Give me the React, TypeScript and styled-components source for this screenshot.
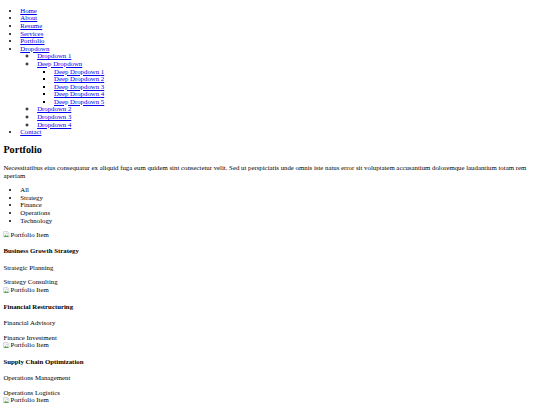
import styled, { createGlobalStyle } from "styled-components";

// The reference is a 1280px-wide unstyled page shown at 540px, so every
// browser default is scaled by 540 / 1280 (16px -> 6.75px, 18px line -> 7.6px).
const GlobalStyle = createGlobalStyle`
  html {
    font-size: 6.8px;
  }
  body {
    margin: 0;
    padding: 3.375px;
    font-family: "Liberation Serif", "Times New Roman", serif;
    font-size: 1rem;
    line-height: 7.6px;
    color: #000;
    background: #fff;
  }
`;

const NavList = styled.ul<{ $level?: number }>`
  margin: ${(p) => (p.$level ? "0" : "3.375px 0 6.75px")};
  padding-left: 16.875px;
  list-style-type: ${(p) =>
    p.$level === 2 ? "square" : p.$level === 1 ? "circle" : "disc"};
`;

const NavLink = styled.a`
  color: #0000ee;
  text-decoration: underline;
`;

const Title = styled.h2`
  font-size: 1.5em;
  line-height: 11.6px;
  font-weight: bold;
  margin: 8.4px 0;
`;

const Intro = styled.p`
  margin: 6.75px 0;
`;

const FilterList = styled.ul`
  margin: 6.75px 0;
  padding-left: 16.875px;
  list-style-type: disc;
`;

const Item = styled.div``;

const Broken = styled.span`
  display: inline-block;
  height: 7.6px;
  svg {
    vertical-align: -1px;
    margin-right: 0.5px;
  }
`;

const ItemTitle = styled.h4`
  font-size: 1em;
  font-weight: bold;
  margin: 9px 0;
`;

const ItemText = styled.p`
  margin: 6.75px 0;
`;

const ItemTag = styled.div``;

const BrokenIcon = () => (
  <svg width="6.5" height="6.5" viewBox="0 0 16 16" aria-hidden="true">
    <path d="M1.5 1.5h10l3 3v10h-13z" fill="#f4f6f8" stroke="#9aa3ab" strokeWidth="1" />
    <path d="M2 14.5l4-5 3 3 2-2 3.5 4z" fill="#5cab4a" />
    <circle cx="10" cy="5.5" r="1.5" fill="#8fb8de" />
  </svg>
);

const navItems = ["Home", "About", "Resume", "Services", "Portfolio"];
const deep = [1, 2, 3, 4, 5];

const items = [
  { title: "Business Growth Strategy", text: "Strategic Planning", tag: "Strategy Consulting" },
  { title: "Financial Restructuring", text: "Financial Advisory", tag: "Finance Investment" },
  { title: "Supply Chain Optimization", text: "Operations Management", tag: "Operations Logistics" },
  { title: "Digital Transformation", text: "Technology Consulting", tag: "Technology Innovation" },
];

export default function App() {
  return (
    <>
      <GlobalStyle />
      <nav>
        <NavList>
          {navItems.map((n) => (
            <li key={n}>
              <NavLink href="#">{n}</NavLink>
            </li>
          ))}
          <li>
            <NavLink href="#">Dropdown</NavLink>
            <NavList $level={1}>
              <li>
                <NavLink href="#">Dropdown 1</NavLink>
              </li>
              <li>
                <NavLink href="#">Deep Dropdown</NavLink>
                <NavList $level={2}>
                  {deep.map((d) => (
                    <li key={d}>
                      <NavLink href="#">Deep Dropdown {d}</NavLink>
                    </li>
                  ))}
                </NavList>
              </li>
              {[2, 3, 4].map((d) => (
                <li key={d}>
                  <NavLink href="#">Dropdown {d}</NavLink>
                </li>
              ))}
            </NavList>
          </li>
          <li>
            <NavLink href="#">Contact</NavLink>
          </li>
        </NavList>
      </nav>
      <section>
        <Title>Portfolio</Title>
        <Intro>
          Necessitatibus eius consequatur ex aliquid fuga eum quidem sint consectetur velit. Sed ut
          perspiciatis unde omnis iste natus error sit voluptatem accusantium doloremque laudantium
          totam rem aperiam
        </Intro>
        <FilterList>
          {["All", "Strategy", "Finance", "Operations", "Technology"].map((f) => (
            <li key={f}>{f}</li>
          ))}
        </FilterList>
        {items.map((it) => (
          <Item key={it.title}>
            <Broken>
              <BrokenIcon />
              Portfolio Item
            </Broken>
            <ItemTitle>{it.title}</ItemTitle>
            <ItemText>{it.text}</ItemText>
            <ItemTag>{it.tag}</ItemTag>
          </Item>
        ))}
      </section>
    </>
  );
}
